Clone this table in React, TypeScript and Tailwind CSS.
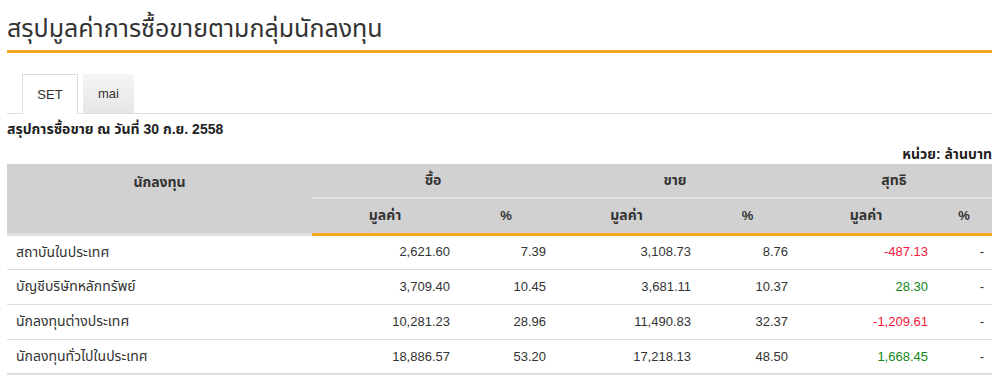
import React from "react";

const rows = [
  { name: "สถาบันในประเทศ", b: "2,621.60", bp: "7.39", s: "3,108.73", sp: "8.76", n: "-487.13", neg: true },
  { name: "บัญชีบริษัทหลักทรัพย์", b: "3,709.40", bp: "10.45", s: "3,681.11", sp: "10.37", n: "28.30", neg: false },
  { name: "นักลงทุนต่างประเทศ", b: "10,281.23", bp: "28.96", s: "11,490.83", sp: "32.37", n: "-1,209.61", neg: true },
  { name: "นักลงทุนทั่วไปในประเทศ", b: "18,886.57", bp: "53.20", s: "17,218.13", sp: "48.50", n: "1,668.45", neg: false },
];

export default function App() {
  const font = { fontFamily: 'Tahoma, "Liberation Sans", "Noto Sans Thai", "Noto Sans", sans-serif' };
  return (
    <div className="w-[997px] h-[385px] bg-white pl-[7px] pr-[5px] text-[#333]" style={font}>
      <div className="h-[50px] flex items-end pb-[6px]">
        <h1 className="text-[25px] leading-[32px] font-normal text-[#333]">สรุปมูลค่าการซื้อขายตามกลุ่มนักลงทุน</h1>
      </div>
      <div className="h-[3px] bg-[#f7a823]" />
      <div className="mt-[21px] flex items-end pl-[15px] border-b border-[#dddddd] h-[40px]">
        <div className="w-[56px] h-[40px] -mb-px bg-white border border-b-0 border-[#dddddd] flex items-center justify-center text-[13px] text-[#333]">
          SET
        </div>
        <div className="ml-[5px] w-[51px] h-[39px] bg-gradient-to-b from-[#f5f5f5] to-[#e6e6e6] flex items-center justify-center text-[13px] text-[#333]">
          mai
        </div>
      </div>
      <div className="h-[30px] flex items-center text-[14px] font-bold text-[#222]">สรุปการซื้อขาย ณ วันที่ 30 ก.ย. 2558</div>
      <div className="h-[20px] flex items-center justify-end text-[14px] font-bold text-[#222]">หน่วย: ล้านบาท</div>
      <table className="w-[985px] border-collapse text-[13px] table-fixed">
        <colgroup>
          <col className="w-[305px]" />
          <col className="w-[146px]" />
          <col className="w-[96px]" />
          <col className="w-[145px]" />
          <col className="w-[97px]" />
          <col className="w-[140px]" />
          <col className="w-[56px]" />
        </colgroup>
        <thead className="text-[14px]">
          <tr className="h-[34px] bg-[#d1d1d1] font-bold">
            <th rowSpan={2} className="align-top pt-[8px] font-bold border-b-[3px] border-[#e0e0e0]">นักลงทุน</th>
            <th colSpan={2} className="font-bold border-b-2 border-[#e2e2e2]">ซื้อ</th>
            <th colSpan={2} className="font-bold border-b-2 border-[#e2e2e2]">ขาย</th>
            <th colSpan={2} className="font-bold border-b-2 border-[#e2e2e2]">สุทธิ</th>
          </tr>
          <tr className="h-[36px] bg-[#d1d1d1]">
            <th className="font-bold border-b-[3px] border-[#f7a823]">มูลค่า</th>
            <th className="font-bold border-b-[3px] border-[#f7a823] text-[13px]">%</th>
            <th className="font-bold border-b-[3px] border-[#f7a823]">มูลค่า</th>
            <th className="font-bold border-b-[3px] border-[#f7a823] text-[13px]">%</th>
            <th className="font-bold border-b-[3px] border-[#f7a823]">มูลค่า</th>
            <th className="font-bold border-b-[3px] border-[#f7a823] text-[13px]">%</th>
          </tr>
        </thead>
        <tbody>
          {rows.map((r, i) => (
            <tr key={i} className={"h-[35px] " + (i === rows.length - 1 ? "border-b-2 border-[#dddddd]" : "border-b border-[#dddddd]")}>
              <td className="pl-[9px] text-left text-[14px]">{r.name}</td>
              <td className="pr-[8px] text-right">{r.b}</td>
              <td className="pr-[8px] text-right">{r.bp}</td>
              <td className="pr-[8px] text-right">{r.s}</td>
              <td className="pr-[8px] text-right">{r.sp}</td>
              <td className={"pr-[8px] text-right " + (r.neg ? "text-[#f5173b]" : "text-[#13881a]")}>{r.n}</td>
              <td className="pr-[8px] text-right">-</td>
            </tr>
          ))}
        </tbody>
      </table>
    </div>
  );
}
